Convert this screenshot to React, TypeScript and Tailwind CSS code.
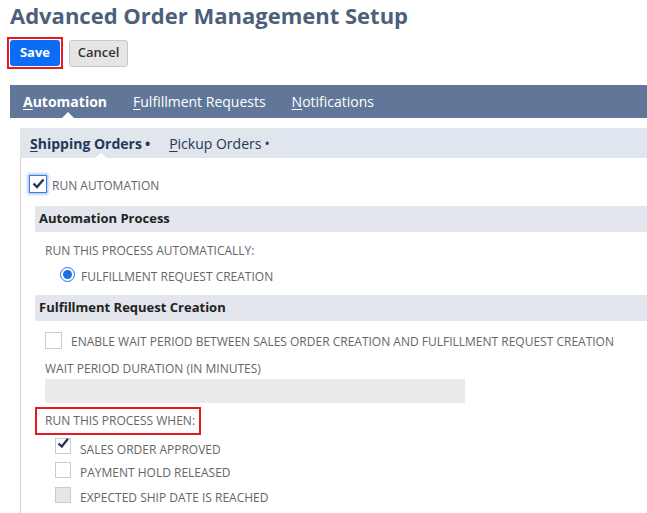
import type { ReactNode } from 'react';

const font = { fontFamily: '"Open Sans", "Noto Sans", Arial, sans-serif' };

function SectionHeader({ children }: { children: ReactNode }) {
  return (
    <div className="ml-[14px] h-[26px] bg-[#e3e6ec] pl-[4px] flex items-center text-[13px] font-bold text-[#222]">
      {children}
    </div>
  );
}

function Label({ children }: { children: ReactNode }) {
  return <span className="text-[12px] text-[#666] uppercase">{children}</span>;
}

function Check({ checked, disabled }: { checked?: boolean; disabled?: boolean }) {
  return (
    <span
      className={`w-[16px] h-[16px] border border-[#ccc] flex items-center justify-center shrink-0 relative ${
        disabled ? 'bg-[#e6e6e6]' : 'bg-white'
      }`}
    >
      {checked && (
        <svg width="13" height="12" viewBox="0 0 13 12" className="absolute left-[1px] -top-[2px]">
          <path d="M1.5 6.5 L4.8 9.6 L11 1.8" fill="none" stroke="#24385b" strokeWidth="2.4" />
        </svg>
      )}
    </span>
  );
}

export default function App() {
  return (
    <div className="w-[647px] h-[513px] overflow-hidden bg-white" style={font}>
      {/* Title */}
      <h1 className="pl-[10px] h-[32px] leading-[32px] text-[22px] font-bold text-[#4d5f7a] -mt-[1px]">
        Advanced Order Management Setup
      </h1>

      {/* Buttons */}
      <div className="flex items-center gap-[6px] pl-[7px] mt-[6px] h-[32px]">
        <div className="border-2 border-[#e41b23] p-[1px] h-[32px] w-[56px] flex">
          <button className="flex-1 bg-[#0b6df6] rounded-[3px] text-white text-[13px] font-bold">Save</button>
        </div>
        <button className="w-[59px] h-[27px] bg-[#e5e5e5] border border-[#c8c8c8] rounded-[3px] text-[13px] font-semibold text-[#333]">
          Cancel
        </button>
      </div>

      {/* Main tabs */}
      <div className="ml-[10px] mt-[16px] h-[33px] bg-[#607799] flex items-center relative">
        <span className="ml-[13px] text-white text-[14px] font-bold relative">
          <span className="underline underline-offset-2">A</span>utomation
          <span className="absolute left-[38px] top-[21px] w-0 h-0 border-l-[7px] border-r-[7px] border-b-[7px] border-l-transparent border-r-transparent border-b-white" />
        </span>
        <span className="ml-[26px] text-white text-[14px]">
          <span className="underline underline-offset-2">F</span>ulfillment Requests
        </span>
        <span className="ml-[26px] text-white text-[14px]">
          <span className="underline underline-offset-2">N</span>otifications
        </span>
      </div>

      <div className="ml-[20px] mt-[10px]">
        {/* Sub tabs */}
        <div className="h-[30px] bg-[#dfe6f0] flex">
          <div className="w-[260px] bg-[#e1e5ec] flex items-center text-[14px] text-[#24385b]">
            <span className="ml-[10px] font-bold relative">
              <span className="underline underline-offset-2">S</span>hipping Orders
              <span className="ml-[3px]">•</span>
              <span className="absolute left-[64px] top-[20px] w-0 h-0 border-l-[7px] border-r-[7px] border-b-[6px] border-l-transparent border-r-transparent border-b-white" />
            </span>
            <span className="ml-[19px]">
              <span className="underline underline-offset-2">P</span>ickup Orders
              <span className="ml-[3px]">•</span>
            </span>
          </div>
        </div>

        <div className="border-l border-[#d0d0d0] pb-[20px]">
          {/* Run automation */}
          <div className="flex items-center h-[48px] pl-[8px] pt-[3px]">
            <span className="w-[18px] h-[18px] border border-[#3b7ddd] bg-white shadow-[0_0_3px_1px_#8fb8f0] flex items-center justify-center">
              <svg width="13" height="11" viewBox="0 0 13 11">
                <path d="M1.5 5.5 L5 9 L11.5 1.5" fill="none" stroke="#24385b" strokeWidth="2.4" />
              </svg>
            </span>
            <span className="ml-[5px]"><Label>Run automation</Label></span>
          </div>

          <SectionHeader>Automation Process</SectionHeader>
          <div className="pl-[24px] pt-[5px] h-[30px]">
            <Label>Run this process automatically:</Label>
          </div>
          <div className="pl-[39px] flex items-center h-[25px]">
            <span className="w-[15px] h-[15px] rounded-full border-[1.5px] border-[#1d6fe3] flex items-center justify-center">
              <span className="w-[9px] h-[9px] rounded-full bg-[#1d6fe3]" />
            </span>
            <span className="ml-[6px]"><Label>Fulfillment request creation</Label></span>
          </div>

          <div className="h-[8px]" />
          <SectionHeader>Fulfillment Request Creation</SectionHeader>

          <div className="pl-[24px] flex items-center h-[36px] pt-[2px]">
            <span className="w-[17px] h-[17px] border border-[#ccc] bg-white" />
            <span className="ml-[9px]"><Label>Enable wait period between sales order creation and fulfillment request creation</Label></span>
          </div>
          <div className="pl-[24px] h-[21px] flex items-end">
            <Label>Wait period duration (in minutes)</Label>
          </div>
          <div className="ml-[24px] mt-[1px] w-[420px] h-[24px] bg-[#ebebeb]" />

          <div className="ml-[14px] mt-[4px] w-[166px] h-[28px] border-2 border-[#e41b23] flex items-center pl-[8px]">
            <Label>Run this process when:</Label>
          </div>

          <div className="pl-[34px] flex flex-col">
            <div className="flex items-center h-[22px]">
              <Check checked />
              <span className="ml-[9px] mt-[3px]"><Label>Sales order approved</Label></span>
            </div>
            <div className="flex items-center h-[25px]">
              <Check />
              <span className="ml-[9px] mt-[3px]"><Label>Payment hold released</Label></span>
            </div>
            <div className="flex items-center h-[25px]">
              <Check disabled />
              <span className="ml-[9px] mt-[3px]"><Label>Expected ship date is reached</Label></span>
            </div>
          </div>
        </div>
      </div>
    </div>
  );
}
